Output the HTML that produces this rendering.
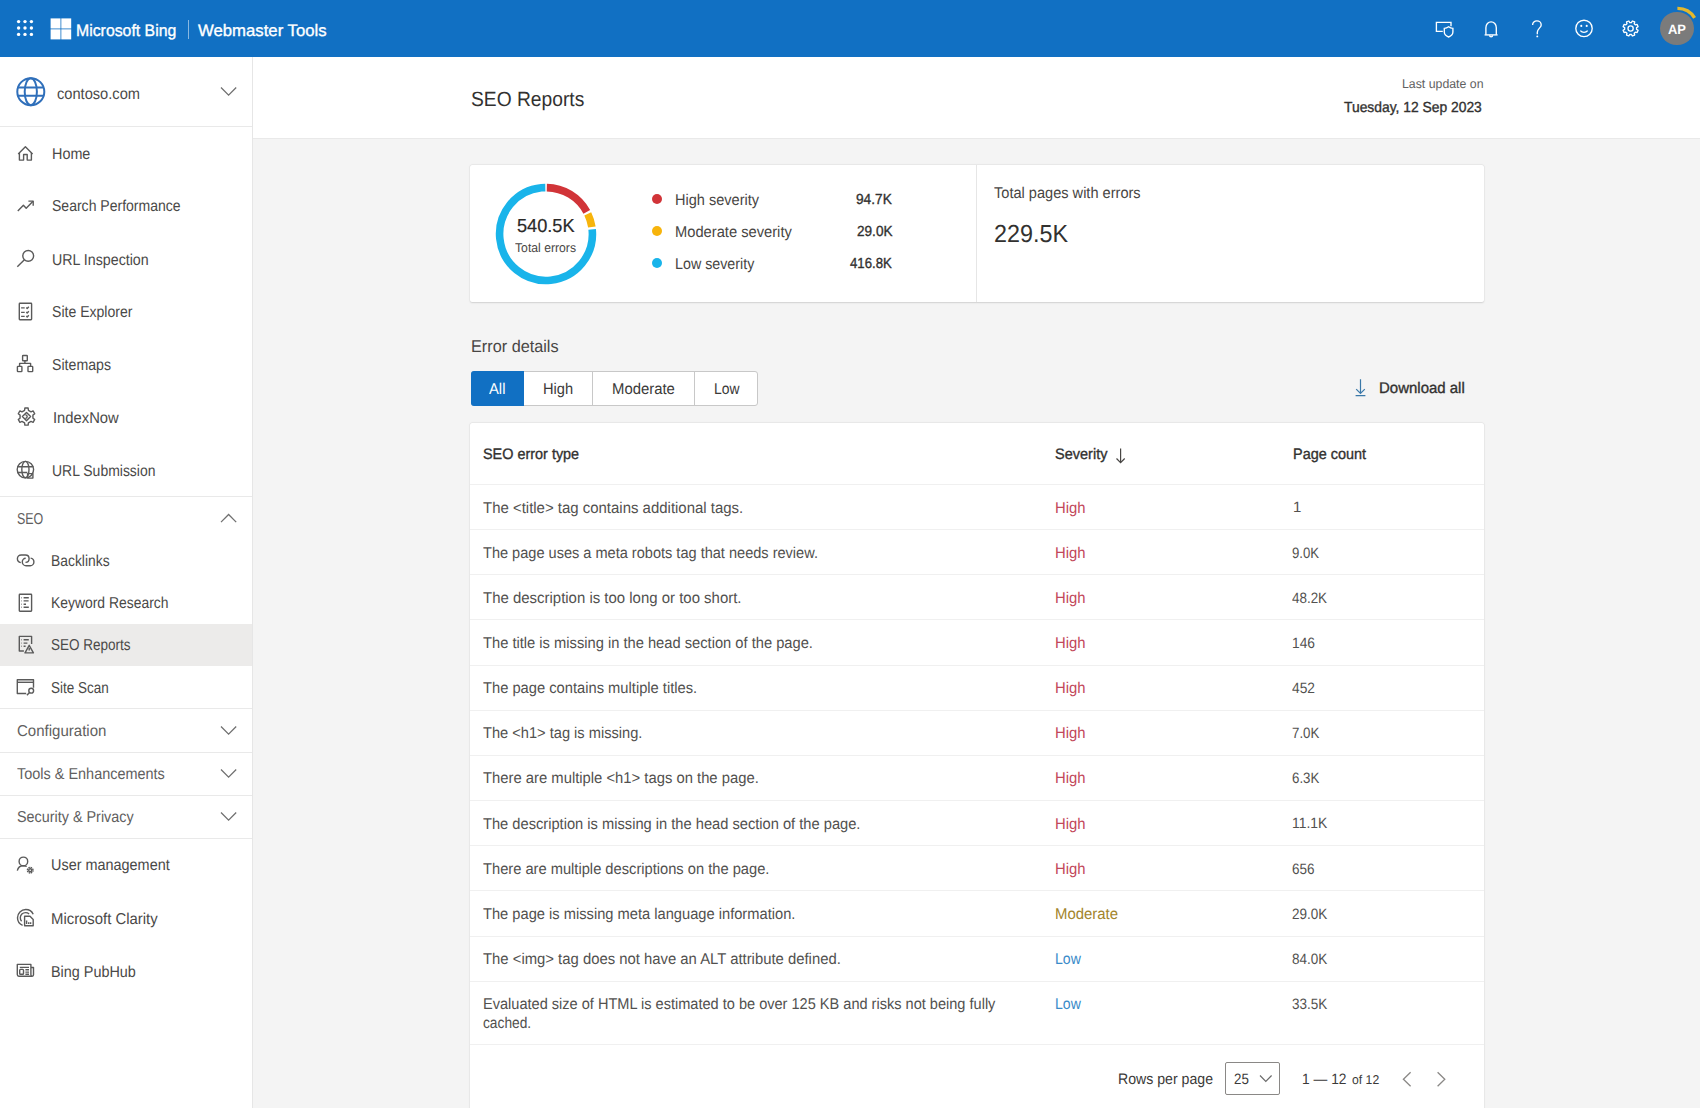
<!DOCTYPE html>
<html><head><meta charset="utf-8">
<style>
*{box-sizing:border-box;margin:0;padding:0}
html,body{width:1700px;height:1108px;overflow:hidden}
body{text-rendering:geometricPrecision;position:relative;background:#f4f4f4;font-family:"Liberation Sans",sans-serif;color:#323130}
.a{position:absolute;white-space:nowrap}
.t{position:absolute;white-space:nowrap;height:20px;line-height:20px;transform-origin:0 50%}
.ic{position:absolute;left:12px;width:28px;height:28px}
.ic *{fill:none;stroke:#5a5a5a;stroke-width:1.4;stroke-linejoin:round}
.sep{position:absolute;left:0;width:252px;height:1px;background:#e9e9e9}
.chev{position:absolute;width:24px;height:14px}
.chev path{fill:none;stroke:#707070;stroke-width:1.3}
.card{position:absolute;background:#fff;border-radius:2px;box-shadow:0 0.6px 1.8px rgba(0,0,0,.13),0 0 0 0.5px rgba(0,0,0,.04)}
.hl{position:absolute;left:470px;width:1014px;height:1px;background:#f0f0f0}
</style></head>
<body>
<div class="a" style="left:0;top:0;width:1700px;height:57px;background:#1170c3;box-shadow:0 0.5px 1px rgba(0,0,0,.35)"></div>
<svg class="a" style="left:16px;top:19px" width="18" height="18" viewBox="0 0 18 18"><g fill="#fff">
<circle cx="2.6" cy="2.6" r="1.7"/><circle cx="9" cy="2.6" r="1.7"/><circle cx="15.4" cy="2.6" r="1.7"/>
<circle cx="2.6" cy="9" r="1.7"/><circle cx="9" cy="9" r="1.7"/><circle cx="15.4" cy="9" r="1.7"/>
<circle cx="2.6" cy="15.4" r="1.7"/><circle cx="9" cy="15.4" r="1.7"/><circle cx="15.4" cy="15.4" r="1.7"/></g></svg>
<svg class="a" style="left:50px;top:18px" width="22" height="22" viewBox="0 0 22 22"><g fill="#fff">
<rect x="0.6" y="0.4" width="9.9" height="10.1"/><rect x="11.3" y="0.4" width="9.9" height="10.1"/><rect x="0.6" y="11.3" width="9.9" height="10.1"/><rect x="11.3" y="11.3" width="9.9" height="10.1"/></g></svg>
<div class="t" style="left:76.33px;top:21px;font-size:16.6px;color:#fff;transform:scaleX(0.9541);-webkit-text-stroke:0.35px currentColor;">Microsoft Bing</div>
<div class="a" style="left:187.6px;top:20px;width:1px;height:19px;background:rgba(255,255,255,.5)"></div>
<div class="t" style="left:198.35px;top:21px;font-size:16.6px;color:#fff;transform:scaleX(1.0081);-webkit-text-stroke:0.35px currentColor;">Webmaster Tools</div>
<svg class="a" style="left:1432px;top:16px" width="26" height="26" viewBox="0 0 26 26"><g fill="none" stroke="#fff" stroke-width="1.35">
<path d="M10.8 15.3H4.4V6.4h14.6v3.8"/>
<path d="M16.6 10.8c1.4 1.1 2.8 1.5 4.3 1.5v3.8c0 2.4-1.6 4-4.3 4.9-2.7-.9-4.3-2.5-4.3-4.9v-3.8c1.5 0 2.9-.4 4.3-1.5z"/></g></svg>
<svg class="a" style="left:1478px;top:16px" width="26" height="26" viewBox="0 0 26 26"><g fill="none" stroke="#fff" stroke-width="1.35">
<path d="M7.9 18.8V11.7c0-3.3 2.3-5.8 5.2-5.8s5.2 2.5 5.2 5.8v7.1"/><path d="M6.6 18.9h13"/><path d="M11.6 19.3a1.5 1.5 0 0 0 3 0"/></g></svg>
<svg class="a" style="left:1524px;top:16px" width="26" height="26" viewBox="0 0 26 26"><g fill="none" stroke="#fff" stroke-width="1.35">
<path d="M8.6 8.9c0-2.4 1.9-4.1 4.3-4.1s4.3 1.7 4.3 4.1c0 3-3.9 3.6-3.9 7.4v1.9"/></g><circle cx="13.3" cy="20.4" r="0.95" fill="#fff"/></svg>
<svg class="a" style="left:1571px;top:15px" width="26" height="26" viewBox="0 0 26 26"><g fill="none" stroke="#fff" stroke-width="1.35">
<circle cx="13" cy="13.4" r="8.2"/><path d="M9.3 15.6c2 2.3 5.4 2.3 7.4 0"/></g><circle cx="10.3" cy="10.9" r="1.05" fill="#fff"/><circle cx="15.7" cy="10.9" r="1.05" fill="#fff"/></svg>
<svg class="a" style="left:1617px;top:15px" width="26" height="26" viewBox="0 0 26 26"><g fill="none" stroke="#fff" stroke-width="1.35" stroke-linejoin="round">
<path d="M14.40 7.55 L15.34 6.00 L17.67 6.97 L17.24 8.73 L18.37 9.86 L20.13 9.43 L21.10 11.76 L19.55 12.70 L19.55 14.30 L21.10 15.24 L20.13 17.57 L18.37 17.14 L17.24 18.27 L17.67 20.03 L15.34 21.00 L14.40 19.45 L12.80 19.45 L11.86 21.00 L9.53 20.03 L9.96 18.27 L8.83 17.14 L7.07 17.57 L6.10 15.24 L7.65 14.30 L7.65 12.70 L6.10 11.76 L7.07 9.43 L8.83 9.86 L9.96 8.73 L9.53 6.97 L11.86 6.00 L12.80 7.55Z"/><circle cx="13.6" cy="13.5" r="2.6"/></g></svg>
<div class="a" style="left:1660.3px;top:11.6px;width:33.6px;height:33.6px;border-radius:50%;background:#7b7b7b"></div>
<svg class="a" style="left:1650px;top:0px" width="50" height="57" viewBox="0 0 50 57"><path d="M27.4 8.3A20 20 0 0 1 44.6 17.8" fill="none" stroke="#e4b82c" stroke-width="3.3"/></svg>
<div class="t" style="left:1668.00px;top:20px;font-size:13.6px;color:#fff;transform:scaleX(0.9522);font-weight:bold;">AP</div>
<div class="a" style="left:0;top:57px;width:253px;height:1051px;background:#fff;border-right:1px solid #e6e6e6"></div>
<svg class="a" style="left:15px;top:76px" width="32" height="32" viewBox="0 0 32 32"><g fill="none" stroke="#2f6fba" stroke-width="2">
<circle cx="15.8" cy="15.7" r="13.5"/><ellipse cx="15.8" cy="15.7" rx="6.1" ry="13.5"/><path d="M2.7 11.6h26.2M2.7 19.8h26.2"/></g></svg>
<div class="t" style="left:56.60px;top:85px;font-size:15.8px;color:#4a4948;transform:scaleX(0.9265);">contoso.com</div>
<svg class="chev" style="left:218.5px;top:84.8px" viewBox="0 0 24 14"><path d="M2 2.5l7.6 7.6 7.6-7.6"/></svg>
<div class="sep" style="top:126px"></div>
<svg class="ic" style="top:142px" viewBox="0 0 28 28"><path d="M6.2 12l7.2-7.2 7.2 7.2"/><path d="M7.4 11v7.1h4.2v-5.6h3.6v5.6h4.2V11"/></svg>
<div class="t" style="left:51.50px;top:145px;font-size:15.8px;color:#4a4948;transform:scaleX(0.9103);">Home</div>
<svg class="ic" style="top:194px" viewBox="0 0 28 28"><path d="M5.8 16.9l5.6-5.7 2.8 3 6.8-6.9" stroke-width="1.5"/><path d="M16.4 7.1h4.8v4.6" stroke-width="1.5"/></svg>
<div class="t" style="left:51.50px;top:197px;font-size:15.8px;color:#4a4948;transform:scaleX(0.8876);">Search Performance</div>
<svg class="ic" style="top:246px" viewBox="0 0 28 28"><circle cx="16.2" cy="9.9" r="5.4"/><path d="M12.4 13.8l-7.1 6.9"/></svg>
<div class="t" style="left:51.50px;top:251px;font-size:15.8px;color:#4a4948;transform:scaleX(0.9000);">URL Inspection</div>
<svg class="ic" style="top:298px" viewBox="0 0 28 28"><rect x="7.3" y="5.3" width="12.3" height="16.4" rx="0.6"/><path d="M9.1 9.9h3.6M9.1 14.4h3.6M9.1 18.4h3.6M14.3 9.6l.9.9 1.6-1.7M14.3 14.1l.9.9 1.6-1.7M14.3 18.1l.9.9 1.6-1.7"/></svg>
<div class="t" style="left:51.50px;top:303px;font-size:15.8px;color:#4a4948;transform:scaleX(0.8899);">Site Explorer</div>
<svg class="ic" style="top:350px" viewBox="0 0 28 28"><rect x="10.6" y="5.5" width="4.7" height="5.3" rx="0.6"/><rect x="5.4" y="16.4" width="4.5" height="5.2" rx="0.6"/><rect x="16" y="16.4" width="4.7" height="5.2" rx="0.6"/><path d="M12.9 10.8v2.6M7.6 16.4v-3h11v3"/></svg>
<div class="t" style="left:51.50px;top:356px;font-size:15.8px;color:#4a4948;transform:scaleX(0.8955);">Sitemaps</div>
<svg class="ic" style="top:403px" viewBox="0 0 28 28"><path d="M12.59 7.28 L12.87 5.05 L16.13 5.05 L16.41 7.28 L19.02 8.79 L21.09 7.92 L22.72 10.74 L20.93 12.09 L20.93 15.11 L22.72 16.46 L21.09 19.28 L19.02 18.41 L16.41 19.92 L16.13 22.15 L12.87 22.15 L12.59 19.92 L9.98 18.41 L7.91 19.28 L6.28 16.46 L8.07 15.11 L8.07 12.09 L6.28 10.74 L7.91 7.92 L9.98 8.79Z"/><path d="M14.5 9.5l4.1 4.1-4.1 4.1-4.1-4.1z" stroke="#b4b4b4" stroke-width="1.1"/><path d="M13.3 11.6c1.2.2 1.9.9 1.9 2s-.7 1.8-1.9 2" stroke="#b4b4b4" stroke-width="1.1"/></svg>
<div class="t" style="left:53.20px;top:409px;font-size:15.8px;color:#4a4948;transform:scaleX(0.9359);">IndexNow</div>
<svg class="ic" style="top:456px" viewBox="0 0 28 28"><circle cx="13.4" cy="13.6" r="8.2"/><ellipse cx="13.4" cy="13.6" rx="3.6" ry="8.2"/><path d="M5.4 10.7h16M5.4 16.5h10"/><path d="M15.6 17.6h5.3v4.5h-5.3z" stroke="#999"/></svg>
<div class="t" style="left:51.50px;top:462px;font-size:15.8px;color:#4a4948;transform:scaleX(0.8840);">URL Submission</div>
<svg class="ic" style="top:546px" viewBox="0 0 28 28"><path d="M8.8 16.6c-2-.3-3.4-1.8-3.4-3.8 0-2.1 1.7-3.8 3.8-3.8h4.2c2.1 0 3.7 1.6 3.7 3.7 0 2-1.6 3.6-3.6 3.7" stroke-width="1.45"/><path d="M13.7 12.3c-2 0-3.4 1.7-3.4 3.6 0 2.1 1.7 3.8 3.8 3.8h4.1c2.1 0 3.7-1.7 3.7-3.8 0-1.9-1.4-3.5-3.3-3.8" stroke-width="1.45"/></svg>
<div class="t" style="left:51.30px;top:552px;font-size:15.8px;color:#4a4948;transform:scaleX(0.8778);">Backlinks</div>
<svg class="ic" style="top:589px" viewBox="0 0 28 28"><rect x="7.3" y="5.3" width="12.3" height="16.9" rx="0.6"/><path d="M9.2 8.8h.5M11.6 8.8h5.2M9.2 11.9h.5M11.6 11.9h5M9.2 15.2h.5M11.6 15.2h2.4M9.2 18.2h.5M11.6 18.2h5.2"/></svg>
<div class="t" style="left:51.30px;top:594px;font-size:15.8px;color:#4a4948;transform:scaleX(0.8801);">Keyword Research</div>
<div class="a" style="left:0;top:624px;width:252px;height:42px;background:#ecebea"></div>
<svg class="ic" style="top:631px" viewBox="0 0 28 28"><path d="M11.9 20H7.3V5.4h12.3v7.6"/><path d="M9.2 8.8h.5M11.6 8.8h5.2M9.2 12.1h.5M11.6 12.1h3.8M9.2 15.2h.5M11.6 15.2h2"/><path d="M17.2 14.3l4.2 7.6h-8.4z"/><path d="M17.2 17.1v2.5"/></svg>
<div class="t" style="left:51.30px;top:636px;font-size:15.8px;color:#4a4948;transform:scaleX(0.8553);">SEO Reports</div>
<svg class="ic" style="top:673px" viewBox="0 0 28 28"><path d="M14.2 20.5H5.3V6.8h16.2v7.9"/><path d="M5.6 9.3h15.6" stroke-width="2.4" stroke="#b0b0b0"/><circle cx="19.2" cy="17.7" r="2.4"/><path d="M17.5 19.4l-2.6 2.8"/></svg>
<div class="t" style="left:51.30px;top:679px;font-size:15.8px;color:#4a4948;transform:scaleX(0.8547);">Site Scan</div>
<svg class="ic" style="top:851px" viewBox="0 0 28 28"><circle cx="11.4" cy="10.4" r="4.3"/><path d="M5.3 19.6c.8-3.3 3.2-4.9 6.1-4.9 1.2 0 2.3.2 3.3.8"/><circle cx="18.2" cy="19.2" r="1.5"/><circle cx="18.2" cy="19.2" r="2.8" stroke-dasharray="1.5 0.7" stroke-width="1.5"/></svg>
<div class="t" style="left:51.40px;top:856px;font-size:15.8px;color:#4a4948;transform:scaleX(0.9134);">User management</div>
<svg class="ic" style="top:904px" viewBox="0 0 28 28"><path d="M10.6 21.4c-3-1.3-5.1-4.2-5.1-7.6 0-4.6 3.7-8.3 8.3-8.3 3.3 0 6.1 1.9 7.4 4.7"/><path d="M9.6 17.3c-.8-.9-1.3-2.2-1.3-3.5 0-3 2.4-5.2 5.3-5.2 1.4 0 2.6.5 3.5 1.3"/><path d="M12.6 12.3h5.4l3.2 3.2v6.3h-8.6z"/><path d="M14.6 19.9v-3.4M16.7 19.9v-1.6M18.6 19.9v-1.6"/></svg>
<div class="t" style="left:51.40px;top:910px;font-size:15.8px;color:#4a4948;transform:scaleX(0.9419);">Microsoft Clarity</div>
<svg class="ic" style="top:957px" viewBox="0 0 28 28"><path d="M19.3 19.2H6.9c-.9 0-1.6-.7-1.6-1.6V7.4h13.6v10.4c0 .8.6 1.4 1.3 1.4s1.3-.6 1.3-1.4V10.5h-2.6"/><path d="M7.8 10.4h9.2M13.4 12.8h3.6M13.4 15.1h3.6M13.4 17.2h3.6"/><rect x="7.7" y="12.4" width="3.8" height="4.8" rx="0.8"/></svg>
<div class="t" style="left:51.40px;top:963px;font-size:15.8px;color:#4a4948;transform:scaleX(0.9115);">Bing PubHub</div>
<div class="sep" style="top:496px"></div>
<div class="t" style="left:17.20px;top:510px;font-size:15.8px;color:#616060;transform:scaleX(0.7889);">SEO</div>
<svg class="chev" style="left:218.5px;top:512px" viewBox="0 0 24 14"><path d="M2 10.1l7.6-7.6 7.6 7.6"/></svg>
<div class="sep" style="top:708px"></div>
<div class="t" style="left:17.20px;top:722px;font-size:15.8px;color:#616060;transform:scaleX(0.9510);">Configuration</div>
<svg class="chev" style="left:218.5px;top:723.5px" viewBox="0 0 24 14"><path d="M2 2.5l7.6 7.6 7.6-7.6"/></svg>
<div class="sep" style="top:751.6px"></div>
<div class="t" style="left:17.20px;top:765px;font-size:15.8px;color:#616060;transform:scaleX(0.9150);">Tools &amp; Enhancements</div>
<svg class="chev" style="left:218.5px;top:766.7px" viewBox="0 0 24 14"><path d="M2 2.5l7.6 7.6 7.6-7.6"/></svg>
<div class="sep" style="top:794.9px"></div>
<div class="t" style="left:17.20px;top:808px;font-size:15.8px;color:#616060;transform:scaleX(0.9102);">Security &amp; Privacy</div>
<svg class="chev" style="left:218.5px;top:809.7px" viewBox="0 0 24 14"><path d="M2 2.5l7.6 7.6 7.6-7.6"/></svg>
<div class="sep" style="top:838.2px"></div>
<div class="a" style="left:253px;top:57px;width:1447px;height:82px;background:#fff;border-bottom:1px solid #e9e9e9"></div>
<div class="t" style="left:471.10px;top:90px;font-size:20.6px;color:#323130;transform:scaleX(0.9338);">SEO Reports</div>
<div class="t" style="left:1401.50px;top:74px;font-size:12.6px;color:#616161;transform:scaleX(0.9778);">Last update on</div>
<div class="t" style="left:1344.33px;top:98px;font-size:14.6px;color:#323130;transform:scaleX(0.9488);-webkit-text-stroke:0.35px currentColor;">Tuesday, 12 Sep 2023</div>
<div class="card" style="left:470px;top:165px;width:1014px;height:136.5px"></div>
<div class="a" style="left:976px;top:165px;width:1px;height:136.5px;background:#e6e6e6"></div>
<svg class="a" style="left:485.6px;top:174.2px" width="120" height="120" viewBox="0 0 120 120"><circle cx="60" cy="60" r="46.4" fill="none" stroke="#d13438" stroke-width="7.6" stroke-dasharray="48.91 291.54" transform="rotate(-89.00 60 60)"/><circle cx="60" cy="60" r="46.4" fill="none" stroke="#f7b40c" stroke-width="7.6" stroke-dasharray="13.93 291.54" transform="rotate(-25.80 60 60)"/><circle cx="60" cy="60" r="46.4" fill="none" stroke="#19b4ea" stroke-width="7.6" stroke-dasharray="222.38 291.54" transform="rotate(-5.80 60 60)"/></svg>
<div class="t" style="left:516.59px;top:216px;font-size:18.8px;color:#2b2a29;transform:scaleX(0.9667);-webkit-text-stroke:0.2px currentColor;">540.5K</div>
<div class="t" style="left:514.80px;top:238px;font-size:12.8px;color:#484644;transform:scaleX(0.9531);">Total errors</div>
<div class="a" style="left:651.8px;top:194.1px;width:10.4px;height:10.4px;border-radius:50%;background:#d13438"></div>
<div class="t" style="left:675.30px;top:191px;font-size:15.6px;color:#484644;transform:scaleX(0.9327);">High severity</div>
<div class="t" style="left:856.33px;top:190px;font-size:14.6px;color:#323130;transform:scaleX(0.9388);-webkit-text-stroke:0.35px currentColor;">94.7K</div>
<div class="a" style="left:651.8px;top:226.1px;width:10.4px;height:10.4px;border-radius:50%;background:#f7b40c"></div>
<div class="t" style="left:675.30px;top:223px;font-size:15.6px;color:#484644;transform:scaleX(0.9426);">Moderate severity</div>
<div class="t" style="left:856.63px;top:222px;font-size:14.6px;color:#323130;transform:scaleX(0.9311);-webkit-text-stroke:0.35px currentColor;">29.0K</div>
<div class="a" style="left:651.8px;top:258.0px;width:10.4px;height:10.4px;border-radius:50%;background:#19b4ea"></div>
<div class="t" style="left:675.30px;top:255px;font-size:15.6px;color:#484644;transform:scaleX(0.9154);">Low severity</div>
<div class="t" style="left:850.32px;top:254px;font-size:14.6px;color:#323130;transform:scaleX(0.9046);-webkit-text-stroke:0.35px currentColor;">416.8K</div>
<div class="t" style="left:994.00px;top:184px;font-size:15.6px;color:#484644;transform:scaleX(0.9348);">Total pages with errors</div>
<div class="t" style="left:994.00px;top:225px;font-size:24.6px;color:#323130;transform:scaleX(0.9489);">229.5K</div>
<div class="t" style="left:470.90px;top:337px;font-size:17.0px;color:#484644;transform:scaleX(0.9560);">Error details</div>
<div class="a" style="left:471px;top:370.5px;width:287px;height:35px;border:1px solid #c8c8c8;border-radius:3px;background:#fff"></div>
<div class="a" style="left:471px;top:370.5px;width:53px;height:35px;border-radius:3px 0 0 3px;background:#1170c3"></div>
<div class="a" style="left:592.2px;top:371px;width:1px;height:34px;background:#c8c8c8"></div>
<div class="a" style="left:693.9px;top:371px;width:1px;height:34px;background:#c8c8c8"></div>
<div class="t" style="left:489.20px;top:380px;font-size:15.6px;color:#fff;transform:scaleX(0.9471);">All</div>
<div class="t" style="left:543.30px;top:380px;font-size:15.6px;color:#3b3a39;transform:scaleX(0.9389);">High</div>
<div class="t" style="left:612.30px;top:380px;font-size:15.6px;color:#3b3a39;transform:scaleX(0.9543);">Moderate</div>
<div class="t" style="left:713.50px;top:380px;font-size:15.6px;color:#3b3a39;transform:scaleX(0.8908);">Low</div>
<svg class="a" style="left:1352px;top:376px" width="18" height="24" viewBox="0 0 18 24"><g fill="none" stroke="#3a78a8" stroke-width="1.2"><path d="M8.5 3.3v14M4.2 13.1l4.3 4.3 4.3-4.3M3.6 19.6h9.8"/></g></svg>
<div class="t" style="left:1379.14px;top:379px;font-size:15.4px;color:#323130;transform:scaleX(0.9734);-webkit-text-stroke:0.35px currentColor;">Download all</div>
<div class="card" style="left:470px;top:423px;width:1014px;height:720px"></div>
<div class="t" style="left:483.43px;top:445px;font-size:15.2px;color:#323130;transform:scaleX(0.9492);-webkit-text-stroke:0.35px currentColor;">SEO error type</div>
<div class="t" style="left:1055.43px;top:445px;font-size:15.2px;color:#323130;transform:scaleX(0.9555);-webkit-text-stroke:0.35px currentColor;">Severity</div>
<svg class="a" style="left:1112px;top:444px" width="18" height="22" viewBox="0 0 18 22"><g fill="none" stroke="#484644" stroke-width="1.2"><path d="M8.6 4.5v14M4.5 14.5l4.1 4.1 4.1-4.1"/></g></svg>
<div class="t" style="left:1292.63px;top:445px;font-size:15.2px;color:#323130;transform:scaleX(0.9509);-webkit-text-stroke:0.35px currentColor;">Page count</div>
<div class="hl" style="top:484.00px"></div>
<div class="t" style="left:483.10px;top:499px;font-size:15.6px;color:#52514f;transform:scaleX(0.9590);">The &lt;title&gt; tag contains additional tags.</div>
<div class="t" style="left:1055.30px;top:499px;font-size:15.6px;color:#c2475a;transform:scaleX(0.9514);">High</div>
<div class="t" style="left:1293.00px;top:498px;font-size:15.0px;color:#52514f;">1</div>
<div class="hl" style="top:529.15px"></div>
<div class="t" style="left:483.10px;top:544px;font-size:15.6px;color:#52514f;transform:scaleX(0.9333);">The page uses a meta robots tag that needs review.</div>
<div class="t" style="left:1055.30px;top:544px;font-size:15.6px;color:#c2475a;transform:scaleX(0.9514);">High</div>
<div class="t" style="left:1292.00px;top:544px;font-size:15.0px;color:#52514f;transform:scaleX(0.8792);">9.0K</div>
<div class="hl" style="top:574.30px"></div>
<div class="t" style="left:483.10px;top:589px;font-size:15.6px;color:#52514f;transform:scaleX(0.9590);">The description is too long or too short.</div>
<div class="t" style="left:1055.30px;top:589px;font-size:15.6px;color:#c2475a;transform:scaleX(0.9514);">High</div>
<div class="t" style="left:1292.00px;top:589px;font-size:15.0px;color:#52514f;transform:scaleX(0.8948);">48.2K</div>
<div class="hl" style="top:619.45px"></div>
<div class="t" style="left:483.10px;top:634px;font-size:15.6px;color:#52514f;transform:scaleX(0.9421);">The title is missing in the head section of the page.</div>
<div class="t" style="left:1055.30px;top:634px;font-size:15.6px;color:#c2475a;transform:scaleX(0.9514);">High</div>
<div class="t" style="left:1292.00px;top:634px;font-size:15.0px;color:#52514f;transform:scaleX(0.9182);">146</div>
<div class="hl" style="top:664.60px"></div>
<div class="t" style="left:483.10px;top:679px;font-size:15.6px;color:#52514f;transform:scaleX(0.9432);">The page contains multiple titles.</div>
<div class="t" style="left:1055.30px;top:679px;font-size:15.6px;color:#c2475a;transform:scaleX(0.9514);">High</div>
<div class="t" style="left:1292.00px;top:679px;font-size:15.0px;color:#52514f;transform:scaleX(0.9182);">452</div>
<div class="hl" style="top:709.75px"></div>
<div class="t" style="left:483.10px;top:724px;font-size:15.6px;color:#52514f;transform:scaleX(0.9384);">The &lt;h1&gt; tag is missing.</div>
<div class="t" style="left:1055.30px;top:724px;font-size:15.6px;color:#c2475a;transform:scaleX(0.9514);">High</div>
<div class="t" style="left:1292.00px;top:724px;font-size:15.0px;color:#52514f;transform:scaleX(0.8856);">7.0K</div>
<div class="hl" style="top:754.90px"></div>
<div class="t" style="left:483.10px;top:769px;font-size:15.6px;color:#52514f;transform:scaleX(0.9496);">There are multiple &lt;h1&gt; tags on the page.</div>
<div class="t" style="left:1055.30px;top:769px;font-size:15.6px;color:#c2475a;transform:scaleX(0.9514);">High</div>
<div class="t" style="left:1292.00px;top:769px;font-size:15.0px;color:#52514f;transform:scaleX(0.8856);">6.3K</div>
<div class="hl" style="top:800.05px"></div>
<div class="t" style="left:483.10px;top:815px;font-size:15.6px;color:#52514f;transform:scaleX(0.9404);">The description is missing in the head section of the page.</div>
<div class="t" style="left:1055.30px;top:815px;font-size:15.6px;color:#c2475a;transform:scaleX(0.9514);">High</div>
<div class="t" style="left:1292.00px;top:814px;font-size:15.0px;color:#52514f;transform:scaleX(0.9265);">11.1K</div>
<div class="hl" style="top:845.20px"></div>
<div class="t" style="left:483.10px;top:860px;font-size:15.6px;color:#52514f;transform:scaleX(0.9413);">There are multiple descriptions on the page.</div>
<div class="t" style="left:1055.30px;top:860px;font-size:15.6px;color:#c2475a;transform:scaleX(0.9514);">High</div>
<div class="t" style="left:1292.00px;top:860px;font-size:15.0px;color:#52514f;transform:scaleX(0.8982);">656</div>
<div class="hl" style="top:890.35px"></div>
<div class="t" style="left:483.10px;top:905px;font-size:15.6px;color:#52514f;transform:scaleX(0.9409);">The page is missing meta language information.</div>
<div class="t" style="left:1055.30px;top:905px;font-size:15.6px;color:#a3852c;transform:scaleX(0.9558);">Moderate</div>
<div class="t" style="left:1292.00px;top:905px;font-size:15.0px;color:#52514f;transform:scaleX(0.8999);">29.0K</div>
<div class="hl" style="top:935.50px"></div>
<div class="t" style="left:483.10px;top:950px;font-size:15.6px;color:#52514f;transform:scaleX(0.9524);">The &lt;img&gt; tag does not have an ALT attribute defined.</div>
<div class="t" style="left:1055.30px;top:950px;font-size:15.6px;color:#3a8bc9;transform:scaleX(0.9013);">Low</div>
<div class="t" style="left:1292.00px;top:950px;font-size:15.0px;color:#52514f;transform:scaleX(0.8999);">84.0K</div>
<div class="hl" style="top:980.65px"></div>
<div class="t" style="left:483.10px;top:995px;font-size:15.6px;color:#52514f;transform:scaleX(0.9334);">Evaluated size of HTML is estimated to be over 125 KB and risks not being fully</div>
<div class="t" style="left:483.10px;top:1014px;font-size:15.6px;color:#52514f;transform:scaleX(0.8815);">cached.</div>
<div class="t" style="left:1055.30px;top:995px;font-size:15.6px;color:#3a8bc9;transform:scaleX(0.9013);">Low</div>
<div class="t" style="left:1292.00px;top:995px;font-size:15.0px;color:#52514f;transform:scaleX(0.8999);">33.5K</div>
<div class="hl" style="top:1043.7px"></div>
<div class="t" style="left:1118.30px;top:1070px;font-size:15.2px;color:#3b3a39;transform:scaleX(0.9303);">Rows per page</div>
<div class="a" style="left:1224.5px;top:1061.7px;width:55.2px;height:33.2px;border:1px solid #8a8886;border-radius:2px"></div>
<div class="t" style="left:1234.40px;top:1070px;font-size:15.0px;color:#3b3a39;transform:scaleX(0.8889);">25</div>
<svg class="a" style="left:1257px;top:1072px" width="18" height="12" viewBox="0 0 18 12"><path d="M3 3.5l5.8 5.8 5.8-5.8" fill="none" stroke="#6b6b6b" stroke-width="1.2"/></svg>
<div class="t" style="left:1302.30px;top:1070px;font-size:15.0px;color:#3b3a39;transform:scaleX(0.9199);">1 — 12</div>
<div class="t" style="left:1351.70px;top:1070px;font-size:12.8px;color:#3b3a39;transform:scaleX(0.9551);">of 12</div>
<svg class="a" style="left:1398px;top:1068px" width="18" height="22" viewBox="0 0 18 22"><path d="M12.6 4.2l-7.2 7 7.2 7" fill="none" stroke="#8a8886" stroke-width="1.3"/></svg>
<svg class="a" style="left:1433px;top:1068px" width="18" height="22" viewBox="0 0 18 22"><path d="M4.6 4.2l7.2 7-7.2 7" fill="none" stroke="#8a8886" stroke-width="1.3"/></svg>
</body></html>
